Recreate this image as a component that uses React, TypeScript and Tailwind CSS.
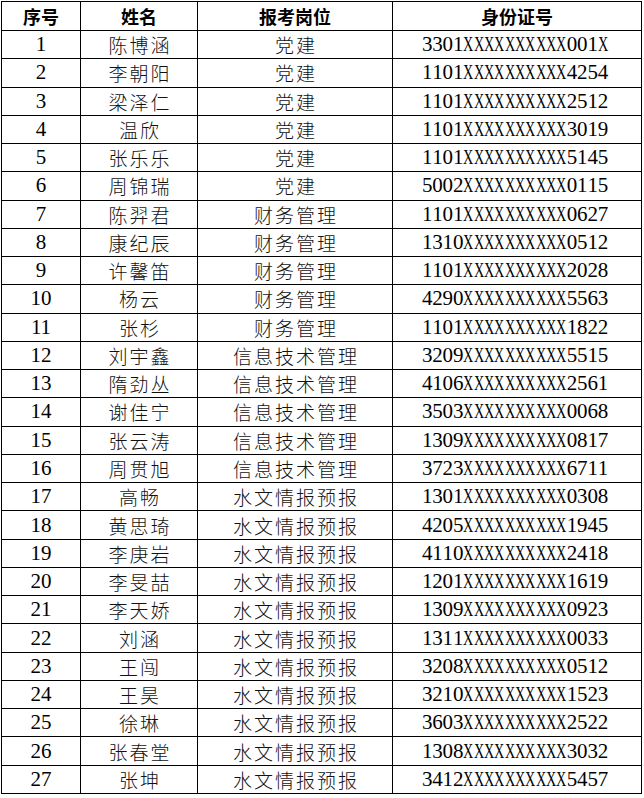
import React from "react";

const rows: [string, string, string, string][] = [
  ["1", "陈博涵", "党建", "3301XXXXXXXXXX001X"],
  ["2", "李朝阳", "党建", "1101XXXXXXXXXX4254"],
  ["3", "梁泽仁", "党建", "1101XXXXXXXXXX2512"],
  ["4", "温欣", "党建", "1101XXXXXXXXXX3019"],
  ["5", "张乐乐", "党建", "1101XXXXXXXXXX5145"],
  ["6", "周锦瑞", "党建", "5002XXXXXXXXXX0115"],
  ["7", "陈羿君", "财务管理", "1101XXXXXXXXXX0627"],
  ["8", "康纪辰", "财务管理", "1310XXXXXXXXXX0512"],
  ["9", "许馨笛", "财务管理", "1101XXXXXXXXXX2028"],
  ["10", "杨云", "财务管理", "4290XXXXXXXXXX5563"],
  ["11", "张杉", "财务管理", "1101XXXXXXXXXX1822"],
  ["12", "刘宇鑫", "信息技术管理", "3209XXXXXXXXXX5515"],
  ["13", "隋劲丛", "信息技术管理", "4106XXXXXXXXXX2561"],
  ["14", "谢佳宁", "信息技术管理", "3503XXXXXXXXXX0068"],
  ["15", "张云涛", "信息技术管理", "1309XXXXXXXXXX0817"],
  ["16", "周贯旭", "信息技术管理", "3723XXXXXXXXXX6711"],
  ["17", "高畅", "水文情报预报", "1301XXXXXXXXXX0308"],
  ["18", "黄思琦", "水文情报预报", "4205XXXXXXXXXX1945"],
  ["19", "李庚岩", "水文情报预报", "4110XXXXXXXXXX2418"],
  ["20", "李旻喆", "水文情报预报", "1201XXXXXXXXXX1619"],
  ["21", "李天娇", "水文情报预报", "1309XXXXXXXXXX0923"],
  ["22", "刘涵", "水文情报预报", "1311XXXXXXXXXX0033"],
  ["23", "王闯", "水文情报预报", "3208XXXXXXXXXX0512"],
  ["24", "王昊", "水文情报预报", "3210XXXXXXXXXX1523"],
  ["25", "徐琳", "水文情报预报", "3603XXXXXXXXXX2522"],
  ["26", "张春堂", "水文情报预报", "1308XXXXXXXXXX3032"],
  ["27", "张坤", "水文情报预报", "3412XXXXXXXXXX5457"],
];

const cell =
  "flex items-center justify-center border-r border-b border-black whitespace-nowrap overflow-hidden";

const latin = "font-['Liberation_Serif','Times_New_Roman',serif] text-[21px] leading-none text-black";
const cjk =
  "font-['Noto_Sans_CJK_SC',sans-serif] font-light text-[19px] tracking-[2px] pl-[2px] leading-none text-[#111]";
const head =
  "font-['Noto_Sans_CJK_SC',sans-serif] font-bold text-[18px] leading-none text-black";

function IdText({ value }: { value: string }) {
  return (
    <span className={latin + " flex items-center pr-[4px]"}>
      {value.split("").map((ch, i) =>
        ch === "X" ? (
          <span key={i} className="inline-block w-[10.35px] origin-left scale-x-[0.68]">
            X
          </span>
        ) : (
          <span key={i} className="inline-block w-[10.35px] text-center">
            {ch}
          </span>
        )
      )}
    </span>
  );
}

export default function App() {
  return (
    <div className="w-[644px] h-[798px] bg-white pt-px pl-px">
      <div className="grid grid-cols-[79px_117px_195px_249px] grid-rows-[29px_repeat(27,minmax(0,1fr))] w-[641px] h-[793px] border-l border-t border-black">
        <div className={cell}>
          <span className={head}>序号</span>
        </div>
        <div className={cell}>
          <span className={head}>姓名</span>
        </div>
        <div className={cell}>
          <span className={head}>报考岗位</span>
        </div>
        <div className={cell}>
          <span className={head}>身份证号</span>
        </div>
        {rows.map(([n, name, pos, id]) => (
          <React.Fragment key={n}>
            <div className={cell}>
              <span className={latin}>{n}</span>
            </div>
            <div className={cell}>
              <span className={cjk}>{name}</span>
            </div>
            <div className={cell}>
              <span className={cjk}>{pos}</span>
            </div>
            <div className={cell}>
              <IdText value={id} />
            </div>
          </React.Fragment>
        ))}
      </div>
    </div>
  );
}
